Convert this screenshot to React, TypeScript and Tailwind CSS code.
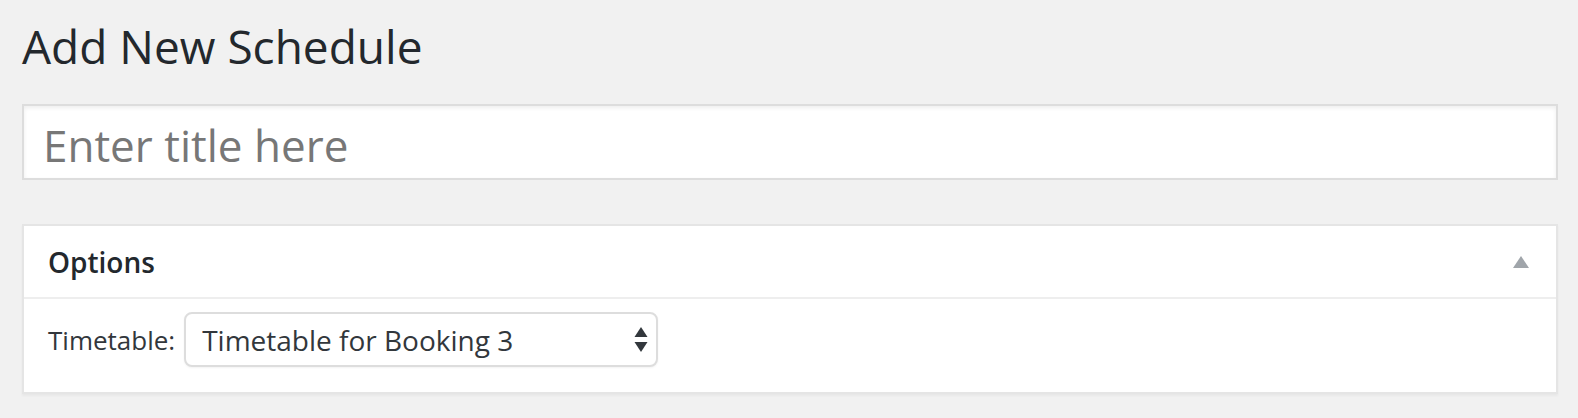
import React from "react";

export default function App() {
  return (
    <div
      className="w-full h-[418px] bg-[#f1f1f1] pl-[22px] pr-[20px] text-[#23282d]"
      style={{ fontFamily: '"Open Sans", "Noto Sans", sans-serif' }}
    >
      <h1 className="pt-[16px] text-[46px] leading-[60px] font-normal text-[#23282d]">
        Add New Schedule
      </h1>

      <div className="mt-[28px] h-[76px] box-border border-2 border-[#dddddd] bg-white shadow-[inset_0_2px_4px_rgba(0,0,0,0.07)] pl-[19px] pt-[17px]">
        <div className="text-[44px] leading-[44px] text-[#777777]">Enter title here</div>
      </div>

      <div className="mt-[44px] h-[170px] box-border border-2 border-[#e5e5e5] bg-white shadow-[0_2px_2px_rgba(0,0,0,0.04)] flex flex-col">
        <div className="h-[71px] flex items-center justify-between pl-[24px] pr-[27px] border-b-2 border-[#eeeeee] box-content">
          <span className="text-[28px] leading-[28px] font-semibold text-[#23282d]">Options</span>
          <svg width="16" height="12" viewBox="0 0 16 12">
            <polygon points="8,0 16,12 0,12" fill="#a0a5aa" />
          </svg>
        </div>
        <div className="flex items-center pl-[24px] pt-[13px]">
          <span className="text-[26px] leading-[26px] text-[#32373c]">Timetable:</span>
          <div className="ml-[9px] w-[474px] h-[55px] box-border border-2 border-[#dddddd] rounded-[8px] bg-white flex items-center justify-between pl-[16px] pr-[8px] shadow-[0_1px_2px_rgba(0,0,0,0.05)]">
            <span className="text-[28px] leading-[28px] text-[#32373c]">Timetable for Booking 3</span>
            <svg width="14" height="26" viewBox="0 0 14 26">
              <polygon points="7,0 13.5,10 0.5,10" fill="#32373c" />
              <polygon points="0.5,15 13.5,15 7,25" fill="#32373c" />
            </svg>
          </div>
        </div>
      </div>
    </div>
  );
}
